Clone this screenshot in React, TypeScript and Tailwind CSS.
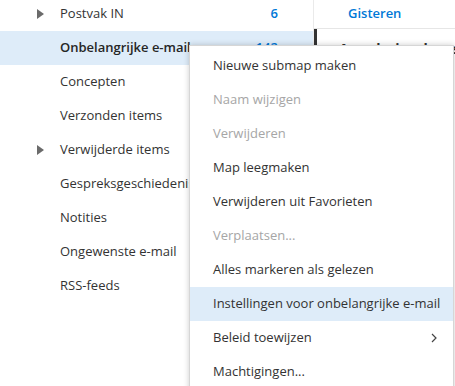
import React from "react";

const folders = [
  { name: "Postvak IN", arrow: true, count: "6" },
  { name: "Onbelangrijke e-mail", selected: true, count: "142" },
  { name: "Concepten" },
  { name: "Verzonden items" },
  { name: "Verwijderde items", arrow: true },
  { name: "Gespreksgeschiedenis" },
  { name: "Notities" },
  { name: "Ongewenste e-mail" },
  { name: "RSS-feeds" },
];

const menu: { label: string; disabled?: boolean; hover?: boolean; sub?: boolean }[] = [
  { label: "Nieuwe submap maken" },
  { label: "Naam wijzigen", disabled: true },
  { label: "Verwijderen", disabled: true },
  { label: "Map leegmaken" },
  { label: "Verwijderen uit Favorieten" },
  { label: "Verplaatsen...", disabled: true },
  { label: "Alles markeren als gelezen" },
  { label: "Instellingen voor onbelangrijke e-mail", hover: true },
  { label: "Beleid toewijzen", sub: true },
  { label: "Machtigingen..." },
];

export default function App() {
  return (
    <div
      className="relative w-[455px] h-[386px] overflow-hidden bg-white flex"
      style={{ fontFamily: '"Open Sans", "Noto Sans", sans-serif' }}
    >
      <div className="w-[313px] shrink-0 flex flex-col mt-[-3px]">
        {folders.map((f) => (
          <div
            key={f.name}
            className={`h-[34px] shrink-0 flex items-center relative ${f.selected ? "bg-[#deecf9]" : ""}`}
          >
            <div className="w-[60px] shrink-0 flex justify-end pr-[16px]">
              {f.arrow && (
                <svg width="7" height="10" viewBox="0 0 7 10">
                  <path d="M0 0 L7 5 L0 10 Z" fill="#6b6b6b" />
                </svg>
              )}
            </div>
            <span
              className={`text-[13px] whitespace-nowrap ${f.selected ? "font-semibold text-[#262626]" : "text-[#333333]"}`}
            >
              {f.name}
            </span>
            {f.count && (
              <span className="absolute right-[35px] text-[13px] font-semibold text-[#0078d7]">{f.count}</span>
            )}
          </div>
        ))}
      </div>
      <div className="flex-1 border-l border-[#eaeaea] flex flex-col">
        <div className="h-[29px] border-b border-[#e6e6e6] flex items-center pl-[34px] shrink-0">
          <span className="text-[13px] font-semibold text-[#0078d7]">Gisteren</span>
        </div>
        <div className="flex h-[40px]">
          <div className="w-[3px] h-[16px] bg-[#333333]" />
          <span className="ml-[22px] mt-[9px] text-[14px] font-bold text-[#333333] whitespace-nowrap">
            Annuleringsbevestiging
          </span>
        </div>
      </div>

      <div className="absolute left-[189px] top-[45px] w-[265px] h-[360px] bg-white border border-[#d6d6d6] shadow-[0_0_6px_rgba(0,0,0,0.2)] pt-[3px]">
        {menu.map((m) => (
          <div
            key={m.label}
            className={`h-[34px] flex items-center pl-[23px] pr-[16px] ${m.hover ? "bg-[#deecf9]" : ""}`}
          >
            <span
              className={`flex-1 text-[13px] whitespace-nowrap ${m.disabled ? "text-[#a6a6a6]" : "text-[#333333]"}`}
            >
              {m.label}
            </span>
            {m.sub && (
              <svg width="6" height="10" viewBox="0 0 6 10">
                <path d="M1 1 L5 5 L1 9" fill="none" stroke="#444" strokeWidth="1.2" />
              </svg>
            )}
          </div>
        ))}
      </div>
    </div>
  );
}
